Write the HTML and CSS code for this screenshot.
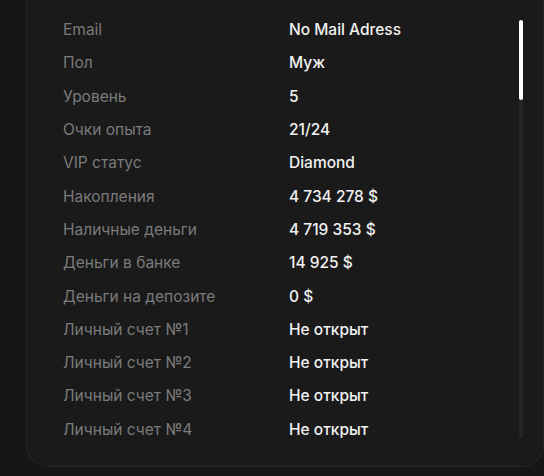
FILE: index.html
```
<!DOCTYPE html>
<html lang="ru">
<head>
    <meta charset="UTF-8">
    <title>Статистика</title>
    <link rel="stylesheet" href="styles.css">
</head>
<body>

<div class="card">
    <div class="stats">
        <div class="row"><span class="label">Email</span><span class="value">No Mail Adress</span></div>
        <div class="row"><span class="label">Пол</span><span class="value">Муж</span></div>
        <div class="row"><span class="label">Уровень</span><span class="value">5</span></div>
        <div class="row"><span class="label">Очки опыта</span><span class="value">21/24</span></div>
        <div class="row"><span class="label">VIP статус</span><span class="value">Diamond</span></div>
        <div class="row"><span class="label">Накопления</span><span class="value">4 734 278 $</span></div>
        <div class="row"><span class="label">Наличные деньги</span><span class="value">4 719 353 $</span></div>
        <div class="row"><span class="label">Деньги в банке</span><span class="value">14 925 $</span></div>
        <div class="row"><span class="label">Деньги на депозите</span><span class="value">0 $</span></div>
        <div class="row"><span class="label">Личный счет №1</span><span class="value">Не открыт</span></div>
        <div class="row"><span class="label">Личный счет №2</span><span class="value">Не открыт</span></div>
        <div class="row"><span class="label">Личный счет №3</span><span class="value">Не открыт</span></div>
        <div class="row"><span class="label">Личный счет №4</span><span class="value">Не открыт</span></div>
    </div>
    <div class="scrollbar">
        <div class="thumb"></div>
    </div>
</div>

</body>
</html>
```

FILE: styles.css
```
body {
    margin: 0;
    padding: 0;
    background: #161616;
    font-family: 'Inter', 'Noto Sans', sans-serif;
    height: 476px;
    overflow: hidden;
}

.card {
    margin-left: 26px;
    width: 518px;
    height: 467px;
    box-sizing: border-box;
    background: #1a1a1a;
    border: 1px solid #262626;
    border-top: none;
    border-radius: 0 0 22px 22px;
    padding: 13px 20px 0 36px;
    display: flex;
}

.stats {
    flex: 1;
}

.row {
    display: flex;
    height: 33.3px;
    align-items: center;
    font-size: 15.5px;
}

.label {
    width: 226px;
    color: #7b7b7b;
}

.value {
    color: #f2f2f2;
    font-weight: 500;
}

.scrollbar {
    width: 4px;
    margin-top: 7px;
    height: 418px;
    background: #262626;
    border-radius: 2px;
}

.thumb {
    height: 80px;
    background: #ffffff;
    border-radius: 2px;
}
```
